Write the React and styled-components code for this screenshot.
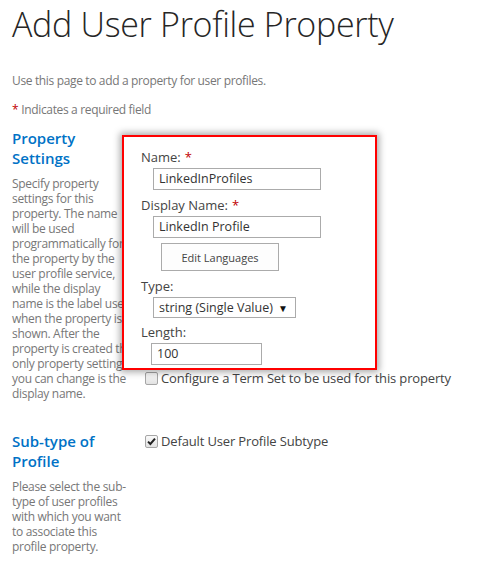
import React from 'react';
import styled, { createGlobalStyle } from 'styled-components';

const GlobalStyle = createGlobalStyle`
  html, body {
    margin: 0;
    padding: 0;
    background: #fff;
  }
  body {
    font-family: "Open Sans", "Noto Sans", "Liberation Sans", sans-serif;
    color: #444;
  }
`;

const Page = styled.div`
  width: 481px;
  height: 569px;
  overflow: hidden;
  padding: 0 0 0 12px;
  box-sizing: border-box;
`;

const Title = styled.h1`
  margin: 0;
  padding-top: 2px;
  font-size: 34px;
  font-weight: 300;
  color: #262626;
  line-height: 44px;
  letter-spacing: -0.3px;
  white-space: nowrap;
`;

const Note = styled.p`
  margin: ${p => p.$top}px 0 0;
  font-size: 12px;
  line-height: 16px;
  letter-spacing: -0.35px;
  color: #777;
`;

const Star = styled.span`
  color: #bf0000;
  margin-right: ${p => (p.$after ? '0' : '3px')};
  margin-left: ${p => (p.$after ? '4px' : '0')};
`;

const Section = styled.div`
  display: grid;
  grid-template-columns: 133px 1fr;
  margin-top: ${p => p.$top}px;
`;

const Side = styled.div`
  position: relative;
  z-index: 0;
`;

const Heading = styled.h3`
  margin: 0;
  font-size: 15px;
  font-weight: 600;
  line-height: 20px;
  color: #0072c6;
  white-space: nowrap;
`;

const Description = styled.p`
  margin: 8px 0 0;
  font-size: 12px;
  line-height: 15px;
  letter-spacing: -0.3px;
  color: #777;
  white-space: nowrap;
`;

const Main = styled.div`
  display: flex;
  flex-direction: column;
`;

/* red annotation frame laid over the form, as in the screenshot */
const Callout = styled.div`
  position: relative;
  z-index: 1;
  margin: 7px 0 0 -23px;
  width: 255px;
  height: 235px;
  box-sizing: border-box;
  border: 2px solid #f00;
  background: #fff;
  box-shadow: 0 0 7px 2px rgba(0, 0, 0, 0.35);
  padding: 10px 0 0 17px;
`;

const Label = styled.div`
  font-size: 13px;
  line-height: 20px;
  color: #444;
  margin-top: ${p => p.$top || 0}px;
`;

const Field = styled.div`
  margin: 1px 0 0 ${p => p.$indent}px;
  width: ${p => p.$width}px;
  height: ${p => p.$height || 22}px;
  box-sizing: border-box;
  border: 1px solid #ababab;
  padding: 0 5px;
  font-size: 12.5px;
  line-height: 20px;
  color: #333;
  white-space: nowrap;
  display: flex;
  align-items: center;
  justify-content: space-between;
`;

const Arrow = styled.span`
  font-size: 10px;
  color: #111;
  margin-right: 2px;
`;

const Button = styled.div`
  margin: 5px 0 0 20px;
  width: 118px;
  height: 28px;
  box-sizing: border-box;
  border: 1px solid #ababab;
  background: #fdfdfd;
  font-size: 11px;
  color: #444;
  display: flex;
  align-items: center;
  justify-content: center;
`;

const CheckRow = styled.div`
  display: flex;
  align-items: center;
  gap: 3px;
  margin-top: ${p => p.$top}px;
  font-size: 13px;
  line-height: 18px;
  letter-spacing: -0.15px;
  color: #444;
  white-space: nowrap;
`;

const Box = styled.span`
  width: 13px;
  height: 13px;
  box-sizing: border-box;
  border: 1px solid #a6a6a6;
  border-radius: 2px;
  background: linear-gradient(#fafafa, #e2e2e2);
  display: inline-flex;
  align-items: center;
  justify-content: center;
`;

const Checkbox = ({ checked }) => (
  <Box>
    {checked && (
      <svg width="9" height="9" viewBox="0 0 9 9">
        <path d="M1 4.6 L3.4 7 L8 1.6" fill="none" stroke="#222" strokeWidth="2" />
      </svg>
    )}
  </Box>
);

const lines = text => text.map((t, i) => (
  <React.Fragment key={i}>{t}{i < text.length - 1 && <br />}</React.Fragment>
));

const propertyText = [
  'Specify property',
  'settings for this',
  'property. The name',
  'will be used',
  'programmatically for',
  'the property by the',
  'user profile service,',
  'while the display',
  'name is the label used',
  'when the property is',
  'shown. After the',
  'property is created the',
  'only property setting',
  'you can change is the',
  'display name.',
];

const subtypeText = [
  'Please select the sub-',
  'type of user profiles',
  'with which you want',
  'to associate this',
  'profile property.',
];

export default function App() {
  return (
    <>
      <GlobalStyle />
      <Page>
        <Title>Add User Profile Property</Title>
        <Note $top={27}>Use this page to add a property for user profiles.</Note>
        <Note $top={13}><Star>*</Star>Indicates a required field</Note>

        <Section $top={10}>
          <Side>
            <Heading>Property<br />Settings</Heading>
            <Description>{lines(propertyText)}</Description>
          </Side>
          <Main>
            <Callout>
              <Label>Name:<Star $after>*</Star></Label>
              <Field $indent={12} $width={168}>LinkedInProfiles</Field>
              <Label $top={5}>Display Name:<Star $after>*</Star></Label>
              <Field $indent={12} $width={168}>LinkedIn Profile</Field>
              <Button>Edit Languages</Button>
              <Label $top={5}>Type:</Label>
              <Field $indent={12} $width={143} $height={21}>
                string (Single Value)<Arrow>▼</Arrow>
              </Field>
              <Label $top={4}>Length:</Label>
              <Field $indent={10} $width={111}>100</Field>
            </Callout>
            <CheckRow $top={-1}>
              <Checkbox />
              Configure a Term Set to be used for this property
            </CheckRow>
          </Main>
        </Section>

        <Section $top={30}>
          <Side>
            <Heading>Sub-type of<br />Profile</Heading>
            <Description>{lines(subtypeText)}</Description>
          </Side>
          <Main>
            <CheckRow $top={1}>
              <Checkbox checked />
              Default User Profile Subtype
            </CheckRow>
          </Main>
        </Section>
      </Page>
    </>
  );
}
